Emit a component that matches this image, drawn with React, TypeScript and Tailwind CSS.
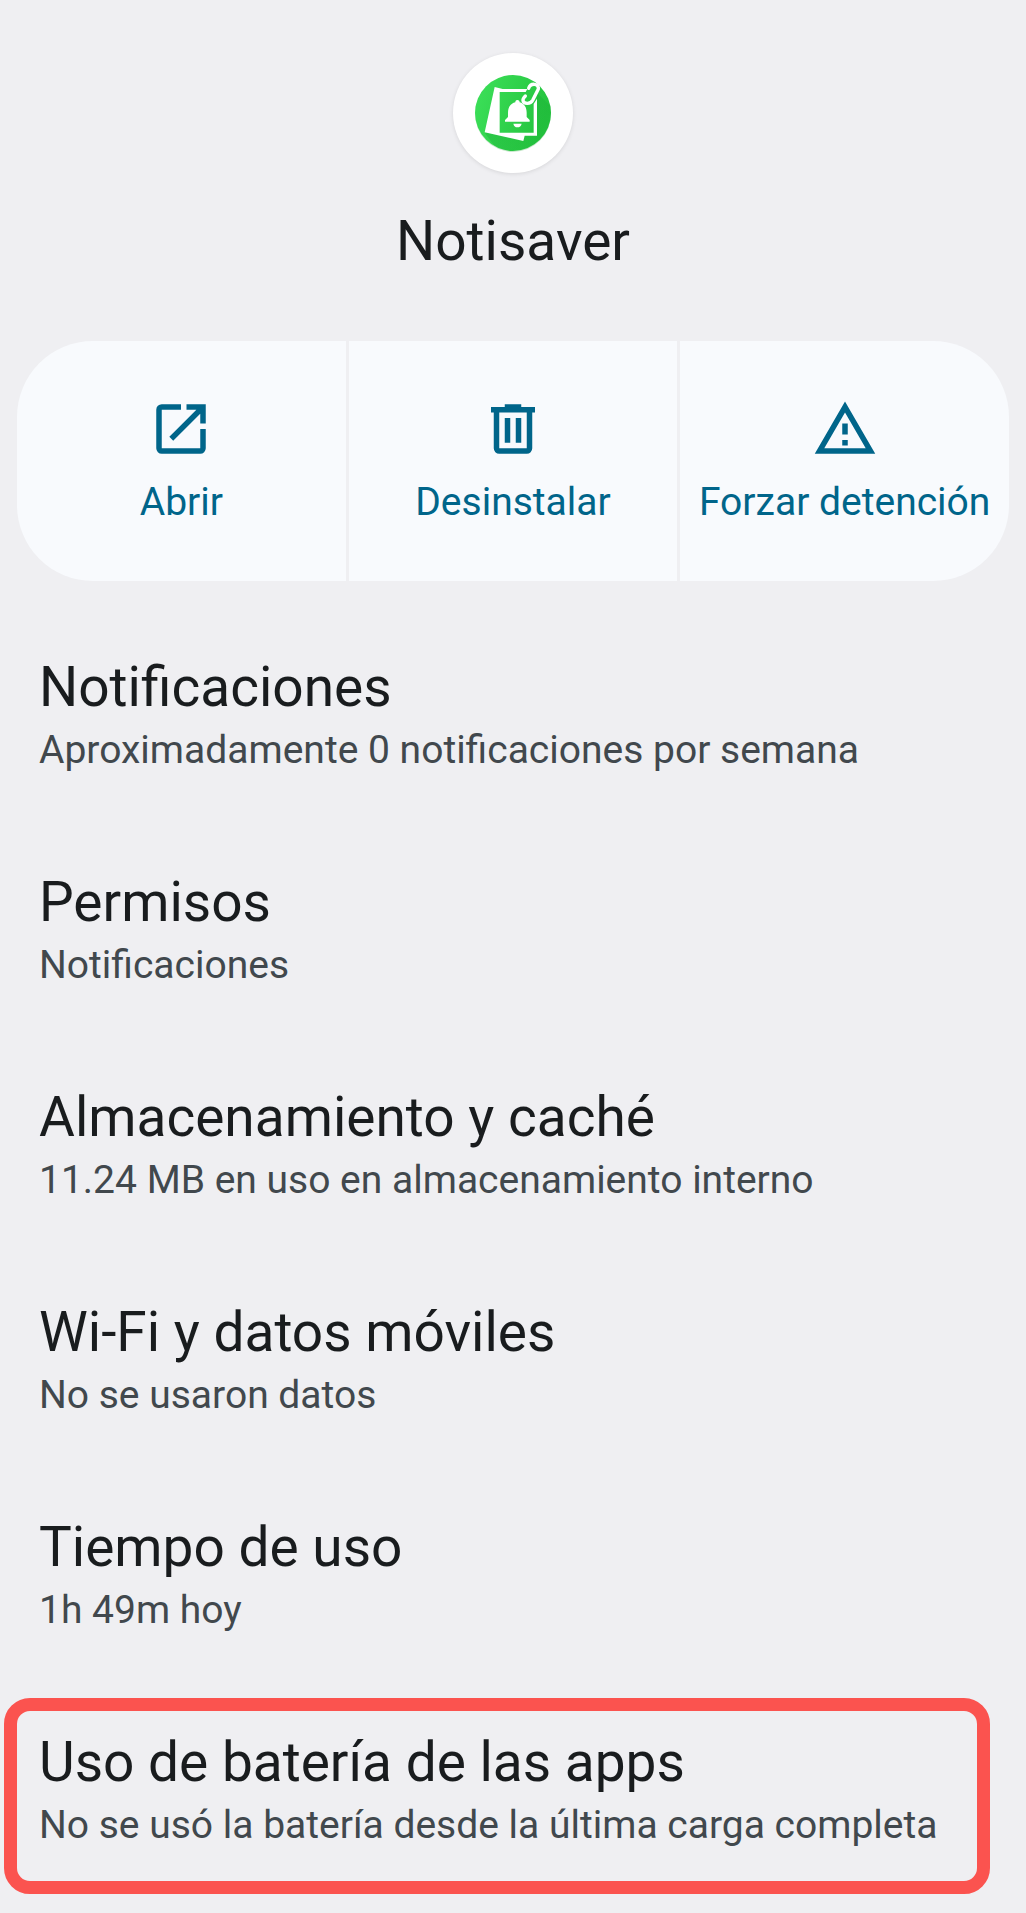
import type { ReactNode } from "react";

const settings = [
  { title: "Notificaciones", summary: "Aproximadamente 0 notificaciones por semana" },
  { title: "Permisos", summary: "Notificaciones" },
  { title: "Almacenamiento y caché", summary: "11.24 MB en uso en almacenamiento interno" },
  { title: "Wi-Fi y datos móviles", summary: "No se usaron datos" },
  { title: "Tiempo de uso", summary: "1h 49m hoy" },
  {
    title: "Uso de batería de las apps",
    summary: "No se usó la batería desde la última carga completa",
    highlighted: true,
  },
];

const actions = [
  {
    label: "Abrir",
    path: "M19 19H5V5h7V3H5a2 2 0 0 0-2 2v14a2 2 0 0 0 2 2h14a2 2 0 0 0 2-2v-7h-2v7ZM14 3v2h3.59l-9.83 9.83 1.41 1.41L19 6.41V10h2V3h-7Z",
  },
  {
    label: "Desinstalar",
    path: "M7 21a2 2 0 0 1-2-2V6H4V4h5V3h6v1h5v2h-1v13a2 2 0 0 1-2 2H7ZM17 6H7v13h10V6ZM9 17h2V8H9v9Zm4 0h2V8h-2v9Z",
  },
  {
    label: "Forzar detención",
    path: "M12 5.99 19.53 19H4.47L12 5.99M12 2 1 21h22L12 2Zm1 14h-2v2h2v-2Zm0-6h-2v4h2v-4Z",
  },
];

function AppLogo() {
  return (
    <svg viewBox="39 39 360 360" className="size-full" aria-hidden="true">
      <defs>
        <linearGradient id="logo-green" x1="0" y1="0" x2="1" y2="0.3">
          <stop offset="0" stopColor="#3de15a" />
          <stop offset="1" stopColor="#25c43f" />
        </linearGradient>
        <linearGradient id="logo-shade" x1="0" y1="0" x2="1" y2="1">
          <stop offset="0" stopColor="#0f9a2b" stopOpacity="0.4" />
          <stop offset="1" stopColor="#0f9a2b" stopOpacity="0" />
        </linearGradient>
        <clipPath id="logo-clip">
          <circle cx="219" cy="219" r="114" />
        </clipPath>
      </defs>
      <circle cx="219" cy="222" r="114" fill="#c9e8cd" />
      <circle cx="219" cy="219" r="114" fill="url(#logo-green)" />
      <g clipPath="url(#logo-clip)">
        <path d="M291 158 345 212V340H180L134 278 291 287Z" fill="url(#logo-shade)" />
      </g>
      <path d="M164 141 188 147H262L257 156H179V278H281V192L291 176V287H254L250 303 134 277Z" fill="#fff" />
      <path
        d="M266 145C271 128 297 129 295 147L278 181C271 194 251 192 249 182C248 177 253 171 256 168"
        fill="none"
        stroke="#fff"
        strokeWidth="10"
        strokeLinecap="round"
        strokeLinejoin="round"
      />
      <path
        d="M232 180C227 180 226 184 226 187C211 191 204 202 204 218V231L195 240V245H269V240L260 231V218C260 202 253 191 239 187C239 184 237 180 232 180Z"
        fill="#fff"
      />
      <path d="M220 251H245C243 259 239 262 232 262C226 262 222 259 220 251Z" fill="#fff" />
    </svg>
  );
}

function ActionButton({ label, children }: { label: string; children: ReactNode }) {
  return (
    <button
      type="button"
      className="flex min-w-0 flex-col items-center gap-[13px] bg-[#f8fafd] pt-[55px] pb-[52px] text-[#00658a]"
    >
      {children}
      <span className="text-[39px] leading-[54px] whitespace-nowrap">{label}</span>
    </button>
  );
}

export default function App() {
  return (
    <main className="min-h-screen bg-[#efeff2] pb-[18px] font-[Roboto,sans-serif] text-[#191c1e]">
      <header className="flex flex-col items-center gap-8 pt-[53px]">
        <div className="size-[120px] rounded-full bg-white shadow-[0_1px_4px_rgba(0,0,0,0.1)]">
          <AppLogo />
        </div>
        <h1 className="text-[55px] leading-[72px]">Notisaver</h1>
      </header>

      <section className="mx-[17px] mt-16 grid grid-cols-3 gap-[3px] overflow-hidden rounded-[76px]">
        {actions.map((action) => (
          <ActionButton key={action.label} label={action.label}>
            <svg viewBox="0 0 24 24" fill="currentColor" className="size-[66px]" aria-hidden="true">
              <path d={action.path} fillRule="evenodd" />
            </svg>
          </ActionButton>
        ))}
      </section>

      <ul className="mt-6">
        {settings.map((item) => (
          <li key={item.title} className="relative">
            <button type="button" className="block w-full px-[39px] pt-[46px] pb-[43px] text-left">
              <span className="block text-[55px] leading-[72px]">{item.title}</span>
              <span className="block text-[39px] leading-[54px] text-[#41484d]">{item.summary}</span>
            </button>
            {item.highlighted && (
              <div className="pointer-events-none absolute top-[18px] right-9 bottom-px left-1 rounded-[26px] border-[13px] border-[#fb534f]" />
            )}
          </li>
        ))}
      </ul>
    </main>
  );
}
